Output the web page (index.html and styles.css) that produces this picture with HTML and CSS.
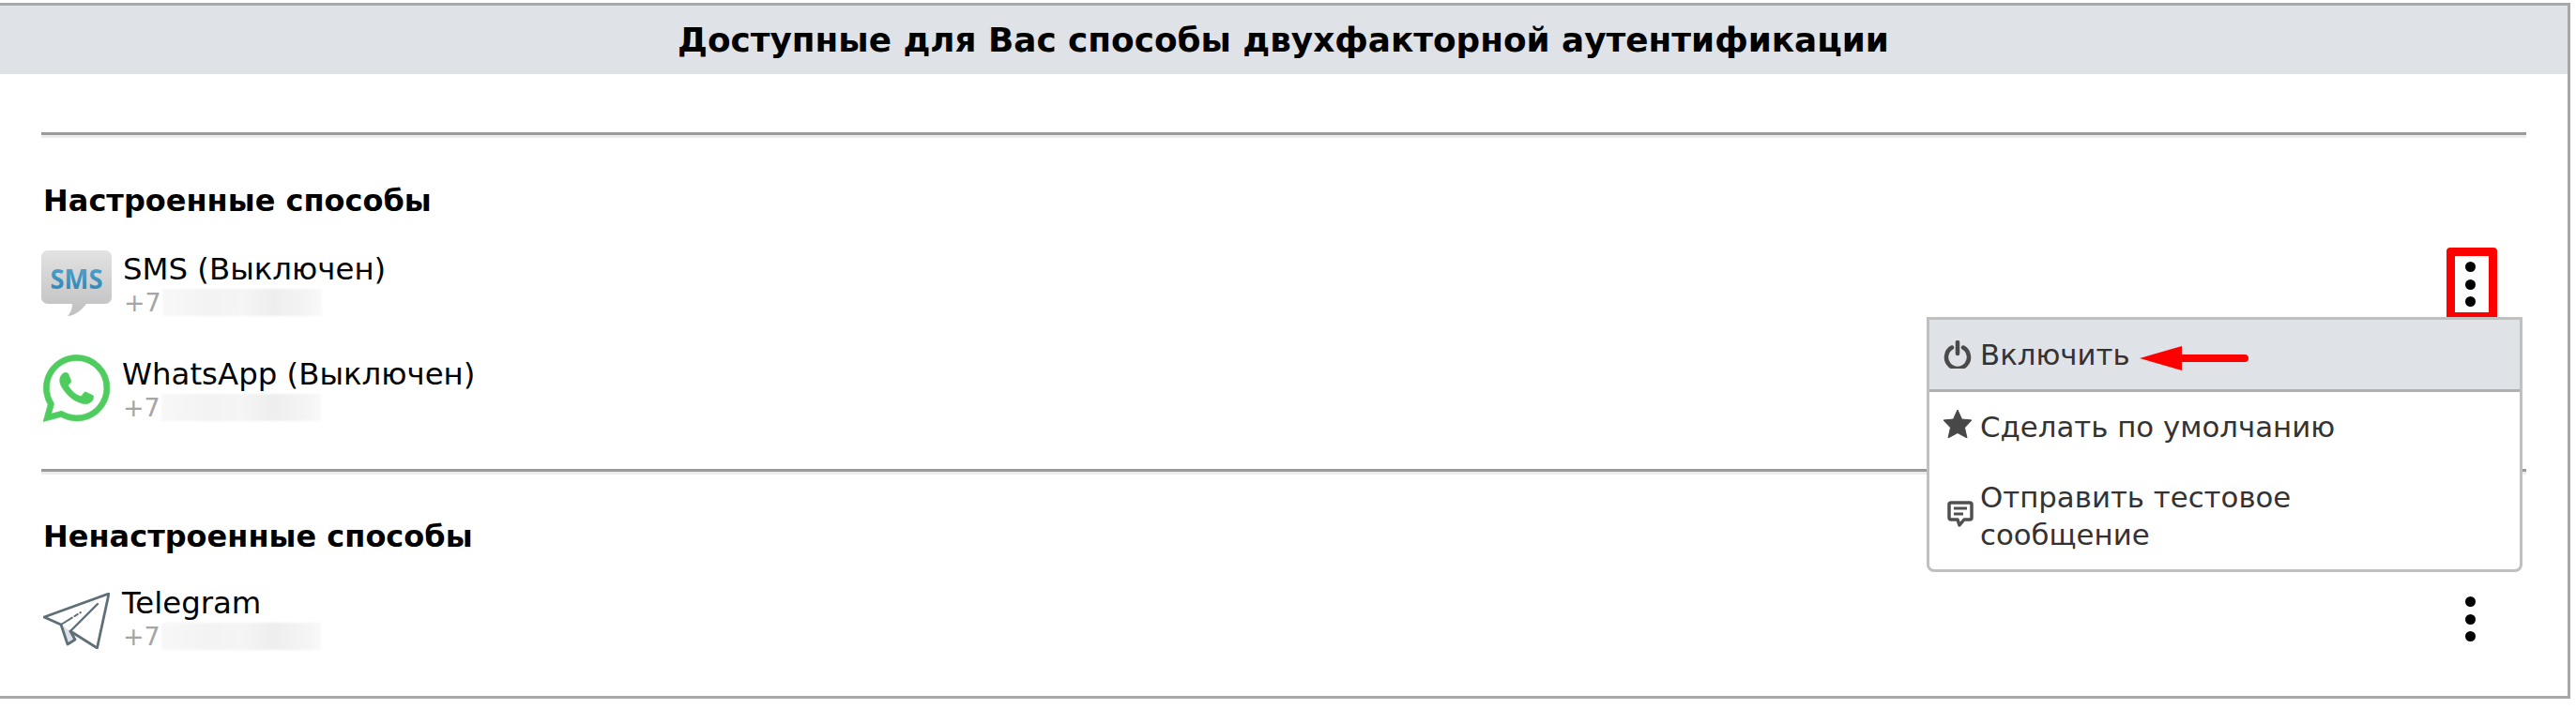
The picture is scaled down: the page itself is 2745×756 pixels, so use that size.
FILE: index.html
```html
<!DOCTYPE html>
<html lang="ru">
<head>
<meta charset="utf-8">
<title>Двухфакторная аутентификация</title>
<link rel="stylesheet" href="styles.css">
</head>
<body>
<main class="panel">
  <h1 class="title">Доступные для Вас способы двухфакторной аутентификации</h1>
  <div class="content">
    <hr class="rule rule-first">
    <h2 class="section-title">Настроенные способы</h2>
    <div class="row row-sms">
      <svg class="icon-sms" viewBox="0 0 75 70">
        <defs>
          <linearGradient id="bub" x1="0" y1="0" x2="0" y2="1"><stop offset="0" stop-color="#e2e2e2"/><stop offset="1" stop-color="#bfbfbf"/></linearGradient>
          <linearGradient id="smsblue" x1="0" y1="0" x2="0" y2="1"><stop offset="0" stop-color="#5aa8d2"/><stop offset="1" stop-color="#2a82b3"/></linearGradient>
        </defs>
        <path d="M7 0H68a7 7 0 0 1 7 7V50a7 7 0 0 1-7 7H48C42 65 34 70 28 70C32 66 33 61 33 57H7a7 7 0 0 1-7-7V7a7 7 0 0 1 7-7z" fill="url(#bub)"/>
        <text x="37.500" y="40.500" class="sms-label" fill="url(#smsblue)" text-anchor="middle" textLength="56" lengthAdjust="spacingAndGlyphs">SMS</text>
      </svg>
      <div class="info">
        <div class="name">SMS (Выключен)</div>
        <div class="phone">+7<span class="smear"></span></div>
      </div>
      <div class="kebab"><i></i><i></i><i></i></div>
    </div>
    <div class="row row-wa">
      <svg class="icon-wa" viewBox="0 0 24 24"><path fill="#4fcc5e" stroke="#4fcc5e" stroke-width=".25" d="M17.472 14.382c-.297-.149-1.758-.867-2.03-.967-.273-.099-.471-.148-.67.15-.197.297-.767.966-.94 1.164-.173.199-.347.223-.644.075-.297-.15-1.255-.463-2.39-1.475-.883-.788-1.48-1.761-1.653-2.059-.173-.297-.018-.458.13-.606.134-.133.298-.347.446-.52.149-.174.198-.298.298-.497.099-.198.05-.371-.025-.52-.075-.149-.669-1.612-.916-2.207-.242-.579-.487-.5-.669-.51-.173-.008-.371-.01-.57-.01-.198 0-.52.074-.792.372-.272.297-1.04 1.016-1.04 2.479 0 1.462 1.065 2.875 1.213 3.074.149.198 2.096 3.2 5.077 4.487.709.306 1.262.489 1.694.625.712.227 1.36.195 1.871.118.571-.085 1.758-.719 2.006-1.413.248-.694.248-1.289.173-1.413-.074-.124-.272-.198-.57-.347m-5.421 7.403h-.004a9.87 9.87 0 01-5.031-1.378l-.361-.214-3.741.982.998-3.648-.235-.374a9.86 9.86 0 01-1.51-5.26c.001-5.45 4.436-9.884 9.888-9.884 2.64 0 5.122 1.03 6.988 2.898a9.825 9.825 0 012.893 6.994c-.003 5.45-4.437 9.884-9.885 9.884m8.413-18.297A11.815 11.815 0 0012.05 0C5.495 0 .16 5.335.157 11.892c0 2.096.547 4.142 1.588 5.945L.057 24l6.305-1.654a11.882 11.882 0 005.683 1.448h.005c6.554 0 11.89-5.335 11.893-11.893a11.821 11.821 0 00-3.48-8.413z"/></svg>
      <div class="info">
        <div class="name">WhatsApp (Выключен)</div>
        <div class="phone">+7<span class="smear"></span></div>
      </div>
    </div>
    <hr class="rule rule-second">
    <h2 class="section-title">Ненастроенные способы</h2>
    <div class="row row-tg">
      <svg class="icon-tg" viewBox="0 0 71 60">
        <path d="M19 34L29 41L34 50L26 55z" fill="#dbe3e8"/>
        <path d="M70 1L1 26L19 34L26 55L34 50L29 41L57.500 59z" fill="none" stroke="#5f6f78" stroke-width="2.800" stroke-linejoin="round"/>
        <path d="M29 41L58 12" fill="none" stroke="#5f6f78" stroke-width="2.400" stroke-linecap="round"/>
        <path d="M19 34L40 21" fill="none" stroke="#5f6f78" stroke-width="2" stroke-linecap="round" stroke-dasharray="14 3 4 3"/>
      </svg>
      <div class="info">
        <div class="name">Telegram</div>
        <div class="phone">+7<span class="smear"></span></div>
      </div>
      <div class="kebab"><i></i><i></i><i></i></div>
    </div>
  </div>

  <div class="highlight"></div>
  <div class="menu">
    <div class="menu-item menu-item-active">
      <svg class="menu-icon" viewBox="0 0 30 30"><path d="M9 7.500a12 12 0 1 0 12 0" fill="none" stroke="#4a4a4a" stroke-width="4.500" stroke-linecap="round"/><path d="M15 2V14" stroke="#4a4a4a" stroke-width="4.500" stroke-linecap="round"/></svg>
      <span>Включить</span>
    </div>
    <div class="menu-item">
      <svg class="menu-icon menu-icon-star" viewBox="0 0 30 30"><path d="M15 0L19.500 10L30 11L22.500 19L25 30L15 24.500L5 30L7.500 19L0 11L10.500 10z" fill="#484848" stroke="#484848" stroke-width="1" stroke-linejoin="round"/></svg>
      <span>Сделать по умолчанию</span>
    </div>
    <div class="menu-item menu-item-wrap">
      <svg class="menu-icon menu-icon-msg" viewBox="0 0 28 28"><path d="M4 2H24a2 2 0 0 1 2 2V18a2 2 0 0 1-2 2H18L13 26L11 20H4a2 2 0 0 1-2-2V4a2 2 0 0 1 2-2z" fill="none" stroke="#505050" stroke-width="3.500" stroke-linejoin="round"/><path d="M7 8H21M7 14H17" stroke="#505050" stroke-width="3"/></svg>
      <span>Отправить тестовое сообщение</span>
    </div>
  </div>
  <svg class="arrow" viewBox="0 0 116 26"><path d="M0 13L45 0V9H112a4 4 0 0 1 0 8H45V26z" fill="#fe0000"/></svg>
</main>
</body>
</html>
```
FILE: styles.css
```css
* { box-sizing: border-box; }
html, body { margin: 0; padding: 0; background: #fff; }
body {
  width: 2745px;
  height: 756px;
  overflow: hidden;
  font-family: "DejaVu Sans", "Liberation Sans", sans-serif;
  color: #000;
}
.panel {
  position: relative;
  width: 2739px;
  height: 742px;
  margin-top: 3px;
  border-top: 3px solid #a8a8a8;
  border-right: 3px solid #a8a8a8;
  border-bottom: 3px solid #a8a8a8;
}
.title {
  height: 73px;
  margin: 0;
  display: flex;
  align-items: center;
  justify-content: center;
  padding-right: 1px;
  background: #dfe2e6;
  font-size: 35.800px;
  font-weight: 700;
}
.content { padding: 0 44px 0 44px; }
.rule {
  height: 6px;
  margin: 0;
  border: 0;
  border-top: 3px solid #9a9a9a;
  border-bottom: 3px solid #ececec;
}
.rule-first { margin-top: 62px; }
.rule-second { margin-top: 52px; }
.section-title {
  margin: 0;
  padding-left: 2px;
  font-size: 32px;
  line-height: 40px;
  font-weight: 700;
}
.rule-first + .section-title { margin-top: 47px; }
.rule-second + .section-title { margin-top: 46px; }
.row { position: relative; display: flex; align-items: flex-start; }
.row-sms { margin-top: 29px; height: 90px; }
.row-wa { margin-top: 25px; height: 70px; }
.row-tg { margin-top: 27px; height: 70px; }
.icon-sms { flex: none; width: 75px; height: 70px; margin-top: 4px; margin-right: 12px; }
.icon-wa { flex: none; width: 71px; height: 72px; margin: 0 13px 0 2px; }
.icon-tg { flex: none; width: 71px; height: 60px; margin: 13px 13px 0 2px; }
.sms-label { font-family: "Open Sans", sans-serif; font-weight: 700; font-size: 29px; }
.info { display: flex; flex-direction: column; }
.row-sms .info { margin-top: 5px; }
.row-wa .info { margin-top: 2px; }
.row-tg .info { margin-top: 5px; }
.name { font-size: 32.400px; line-height: 38px; }
.phone {
  display: flex;
  align-items: center;
  height: 32px;
  padding-left: 1px;
  font-size: 27px;
  color: #a5a5a5;
}
.smear {
  width: 170px;
  height: 29px;
  margin-left: 1px;
  background: linear-gradient(90deg, #f8f8f8, #f3f3f3 30%, #f5f5f5 50%, #eeeeee 70%, #f4f4f4 90%, #f9f9f9);
  filter: blur(1px);
}
.kebab {
  display: flex;
  flex-direction: column;
  gap: 7.500px;
  position: absolute;
  right: 54px;
  top: 0;
}
.kebab i { display: block; width: 11px; height: 11px; border-radius: 50%; background: #000; }
.row-sms .kebab { top: 16px; }
.row-tg .kebab { top: 17px; }
.highlight {
  position: absolute;
  left: 2607px;
  top: 258px;
  width: 54px;
  height: 78px;
  border: 9px solid #fe0000;
  border-radius: 4px;
}
.menu {
  position: absolute;
  left: 2053px;
  top: 332px;
  width: 635px;
  height: 272px;
  background: #fff;
  border: 3px solid #c0c0c0;
  border-radius: 0 0 8px 8px;
  color: #333;
  font-size: 30.800px;
}
.menu-item {
  display: flex;
  align-items: center;
  height: 73px;
  padding-left: 15px;
}
.menu-item-active { height: 77px; background: #dfe2e6; border-bottom: 3px solid #b0b0b0; }
.menu-item-wrap { height: 114px; padding-top: 4px; line-height: 40px; }
.menu-item-wrap span { width: 420px; }
.menu-icon { flex: none; width: 30px; height: 30px; margin-right: 9px; }
.menu-icon-star { margin-bottom: 5px; }
.menu-icon-msg { width: 28px; height: 28px; margin: 0 7px 5px 4px; }
.arrow {
  position: absolute;
  left: 2280px;
  top: 363px;
  width: 116px;
  height: 26px;
}
```
